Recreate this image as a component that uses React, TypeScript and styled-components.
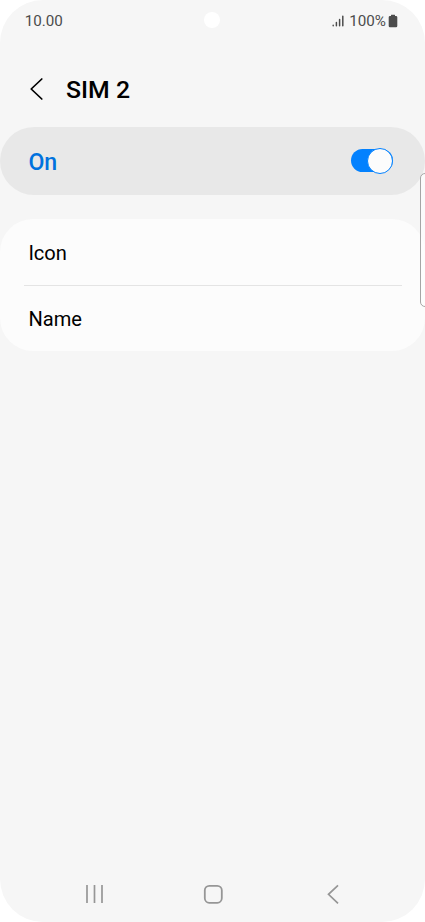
import React from "react";
import styled, { createGlobalStyle } from "styled-components";

const GlobalStyle = createGlobalStyle`
  * { box-sizing: border-box; }
  body { margin: 0; background: #fff; font-family: Roboto, "Liberation Sans", sans-serif; }
  svg { display: block; }
`;

const Screen = styled.div`
  position: relative;
  display: flex;
  flex-direction: column;
  width: 425px;
  height: 922px;
  border-radius: 43px;
  background: #f6f6f6;
  overflow: hidden;
`;

const StatusBar = styled.header`
  display: flex;
  align-items: center;
  justify-content: space-between;
  height: 42px;
  padding: 0 27.5px 0 24.7px;
  color: #4c4c4c;
  font-size: 15.2px;
`;

const StatusIcons = styled.div`
  display: flex;
  align-items: center;
`;

const Percent = styled.span`
  margin: 0 1.5px 0 5px;
`;

const Camera = styled.div`
  position: absolute;
  top: 12px;
  left: 204px;
  width: 16px;
  height: 16px;
  border-radius: 50%;
  background: #fff;
`;

const TitleBar = styled.div`
  display: flex;
  align-items: center;
  height: 84.5px;
  padding: 10px 0 0 28px;
`;

const BackButton = styled.button`
  padding: 0;
  border: 0;
  background: none;
`;

const Title = styled.h1`
  margin: 0 0 0 21px;
  padding-top: 2px;
  font-size: 24.8px;
  font-weight: 500;
  line-height: 30px;
  color: #000;
`;

const SwitchCard = styled.section`
  display: flex;
  align-items: center;
  justify-content: space-between;
  height: 68.5px;
  padding: 0 32px 0 28.4px;
  border-radius: 34px;
  background: #e8e8e8;
`;

const SwitchLabel = styled.span`
  padding-top: 3px;
  font-size: 23.1px;
  font-weight: 500;
  color: #0072de;
`;

const SwitchTrack = styled.button`
  display: flex;
  align-items: center;
  justify-content: flex-end;
  width: 42.5px;
  height: 23px;
  padding: 0;
  border: 0;
  border-radius: 12px;
  background: #0381fe;
`;

const SwitchThumb = styled.span`
  flex: none;
  width: 26px;
  height: 26px;
  border: 1px solid #0381fe;
  border-radius: 50%;
  background: #fcfcfc;
`;

const OptionList = styled.section`
  display: flex;
  flex-direction: column;
  height: 132px;
  margin-top: 24px;
  padding: 0 24px;
  border-radius: 33px;
  background: #fcfcfc;
`;

const Option = styled.div`
  display: flex;
  flex: 1;
  align-items: center;
  padding: 2px 0 0 4.4px;
  font-size: 20.1px;
  color: #000;
`;

const Divider = styled.div`
  height: 1px;
  margin-right: -1px;
  background: #e4e4e4;
`;

const EdgeHandle = styled.div`
  position: absolute;
  top: 172.5px;
  left: 420px;
  width: 12px;
  height: 134px;
  border: 1px solid #a5a5a5;
  border-radius: 5px;
  background: rgba(252, 252, 252, 0.8);
`;

const NavBar = styled.nav`
  display: flex;
  align-items: center;
  height: 56px;
  margin-top: auto;
  padding-left: 85px;
`;

const NavButton = styled.button<{ $gap?: number }>`
  margin-left: ${({ $gap = 0 }) => $gap}px;
  padding: 0;
  border: 0;
  background: none;
`;

export default function App() {
  return (
    <>
      <GlobalStyle />
      <Screen>
        <StatusBar>
          <span>10.00</span>
          <StatusIcons>
            <svg width="12" height="12" viewBox="0 0 12 12" fill="none" stroke="#4c4c4c" strokeWidth="1.5" strokeLinecap="round">
              <path d="M1.2 10.3V10.8M4.4 7.6V10.8M7.6 4.4V10.8M10.8 1.2V10.8" />
            </svg>
            <Percent>100%</Percent>
            <svg width="10" height="14" viewBox="0 0 10 14" fill="#4c4c4c">
              <path d="M3 1Q3 .7 3.3 .7H6.7Q7 .7 7 1V2H8Q9.3 2 9.3 3.3V12Q9.3 13.3 8 13.3H2Q.7 13.3 .7 12V3.3Q.7 2 2 2H3Z" />
            </svg>
          </StatusIcons>
        </StatusBar>
        <Camera />
        <TitleBar>
          <BackButton aria-label="Back">
            <svg width="17" height="24" viewBox="0 0 17 24" fill="none" stroke="#000" strokeWidth="1.7" strokeLinecap="round" strokeLinejoin="round">
              <path d="M13.8 2L3.2 12L13.8 22" />
            </svg>
          </BackButton>
          <Title>SIM 2</Title>
        </TitleBar>
        <SwitchCard>
          <SwitchLabel>On</SwitchLabel>
          <SwitchTrack role="switch" aria-checked="true" aria-label="SIM 2">
            <SwitchThumb />
          </SwitchTrack>
        </SwitchCard>
        <OptionList>
          <Option>Icon</Option>
          <Divider />
          <Option>Name</Option>
        </OptionList>
        <EdgeHandle />
        <NavBar>
          <NavButton aria-label="Recent apps">
            <svg width="19" height="20" viewBox="0 0 19 20" fill="none" stroke="#969696" strokeWidth="1.7">
              <path d="M2 1V19M9.5 1V19M17 1V19" />
            </svg>
          </NavButton>
          <NavButton $gap={99} aria-label="Home">
            <svg width="20" height="20" viewBox="0 0 20 20" fill="none" stroke="#969696" strokeWidth="1.8">
              <rect x="1.8" y="1.8" width="17" height="17" rx="4.5" />
            </svg>
          </NavButton>
          <NavButton $gap={103} aria-label="Back">
            <svg width="13" height="20" viewBox="0 0 13 20" fill="none" stroke="#969696" strokeWidth="1.7">
              <path d="M12 1.3L2.5 10.3L12 19.3" />
            </svg>
          </NavButton>
        </NavBar>
      </Screen>
    </>
  );
}
